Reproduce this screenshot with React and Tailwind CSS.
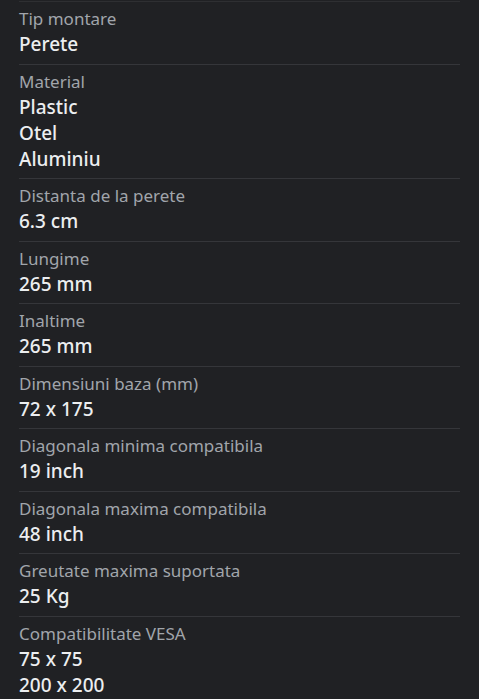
import React from 'react';

const specs = [
  { label: 'Tip montare', values: ['Perete'] },
  { label: 'Material', values: ['Plastic', 'Otel', 'Aluminiu'] },
  { label: 'Distanta de la perete', values: ['6.3 cm'] },
  { label: 'Lungime', values: ['265 mm'] },
  { label: 'Inaltime', values: ['265 mm'] },
  { label: 'Dimensiuni baza (mm)', values: ['72 x 175'] },
  { label: 'Diagonala minima compatibila', values: ['19 inch'] },
  { label: 'Diagonala maxima compatibila', values: ['48 inch'] },
  { label: 'Greutate maxima suportata', values: ['25 Kg'] },
  { label: 'Compatibilitate VESA', values: ['75 x 75', '200 x 200'] },
];

const App = () => {
  return (
    <div className="min-h-screen bg-[#202124] pt-px font-['Noto_Sans',sans-serif]">
      <div className="mx-[19px] border-t border-[#2e2f32]">
        {specs.map((spec) => (
          <div key={spec.label} className="border-b border-[#35363a] pt-[5px] pb-[6.5px]">
            <p className="text-[17px] leading-[24px] text-[#a1a5ab]">{spec.label}</p>
            {spec.values.map((v) => (
              <p key={v} className="text-[19px] leading-[26px] font-medium text-[#eceef0]">
                {v}
              </p>
            ))}
          </div>
        ))}
      </div>
    </div>
  );
};

export default App;
